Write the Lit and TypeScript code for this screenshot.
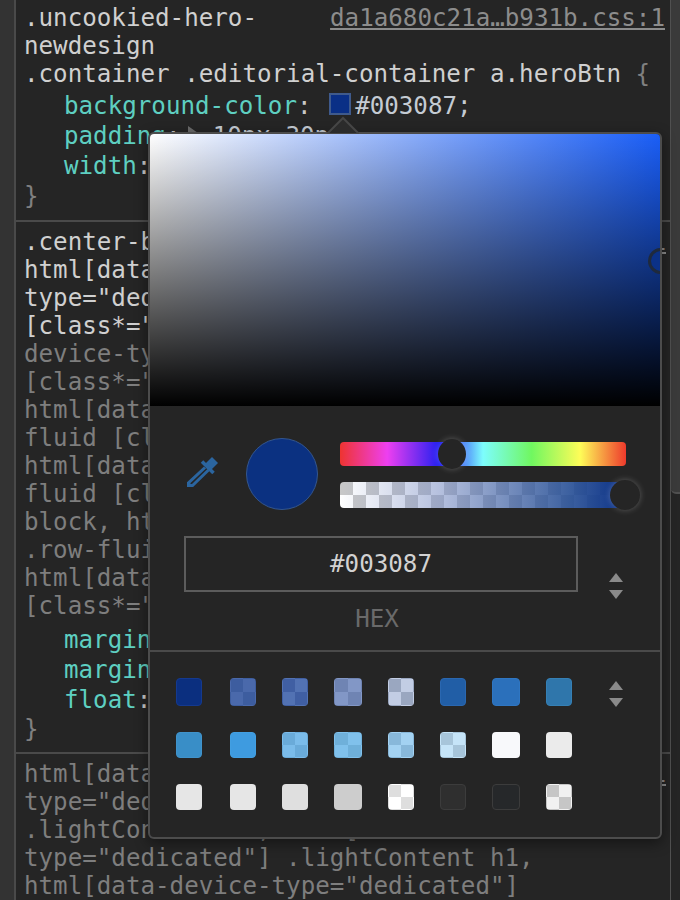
import { LitElement, html, css } from "lit";
import { customElement } from "lit/decorators.js";

type Line = { t: string; dim?: boolean };

const swatches: { a: string; b?: string; bd?: string }[] = [
  { a: "#0b2f7f", bd: "#14398f" },
  { a: "#3d5d9f", b: "#4a69ab" },
  { a: "#405fa3", b: "#5272b3" },
  { a: "#6f84b3", b: "#8297c6" },
  { a: "#9aa7c0", b: "#c2cde4" },
  { a: "#215ea6", bd: "#2a67b0" },
  { a: "#2b70bb", bd: "#2f76c2" },
  { a: "#2f76ab", bd: "#3580b5" },
  { a: "#398ec7", bd: "#4093cb" },
  { a: "#3e9be0", bd: "#429fe2" },
  { a: "#6aabd9", b: "#7bbcea" },
  { a: "#6fb0da", b: "#80c1ec" },
  { a: "#88b8da", b: "#a3d2f2" },
  { a: "#a7c5da", b: "#c5e4f8" },
  { a: "#f8f9fb" },
  { a: "#ebebeb" },
  { a: "#e6e6e6" },
  { a: "#e6e6e6" },
  { a: "#dfdfdf" },
  { a: "#cdcdcd" },
  { a: "#dedede", b: "#ffffff" },
  { a: "#2f2f2f", bd: "#3c3c3c" },
  { a: "#26282a", bd: "#3c3c3c" },
  { a: "#c6c6c6", b: "#f1f1f1" },
];

@customElement("app-root")
export class AppRoot extends LitElement {
  static styles = css`
    :host {
      display: block;
      position: relative;
      width: 680px;
      height: 900px;
      overflow: hidden;
      background: #252525;
      font-family: "DejaVu Sans Mono", "Liberation Mono", monospace;
      font-size: 24.2px;
      line-height: 28px;
      color: #d0d0d0;
    }
    .page { display: flex; height: 900px; }
    .gutter { width: 14px; flex: none; background: #333; border-right: 2px solid #4a4a4a; }
    .pane { flex: 1; min-width: 0; overflow: hidden; }
    .scroll { width: 9px; flex: none; border-left: 1px solid #505050; }
    .thumb {
      height: 492px;
      background: #3a3a3a;
      border-bottom: 2px solid #505050;
      border-bottom-left-radius: 5px;
    }
    .rule {
      padding: 4px 0 0 9px;
      border-bottom: 2px solid #4a4a4a;
      position: relative;
      box-sizing: border-box;
    }
    .rule.first { height: 222px; }
    .rule.second { height: 532px; padding-top: 6px; }
    .rule.third { border-bottom: 0; padding-top: 6px; }
    .sel { height: 28px; white-space: pre; margin-left: -1px; }
    .dim { color: #7e7e7e; }
    .brace { color: #808080; }
    .decl { height: 30px; line-height: 30px; padding-left: 39px; white-space: pre; }
    .first .decl.top { margin-top: 3px; }
    .first .decl + .sel { margin-top: 1px; }
    .second .decl.top { margin-top: 5px; }
    .prop { color: #5ecfc1; }
    .colon { color: #c8c8c8; }
    .val { color: #c4cbd3; }
    .tri {
      display: inline-block;
      width: 0;
      height: 0;
      margin: 0 0 0 -7px;
      vertical-align: 4px;
      border-left: 10px solid #6c6c6c;
      border-top: 7px solid transparent;
      border-bottom: 7px solid transparent;
    }
    .chip {
      display: inline-block;
      box-sizing: border-box;
      width: 22px;
      height: 22px;
      margin: 0 4px 0 3px;
      vertical-align: -1px;
      background: #0a2f86;
      border: 2px solid #3f5a8c;
    }
    .src {
      position: absolute;
      right: 5px;
      top: 4px;
      color: #8c8c8c;
      text-decoration: underline;
    }
    .src.low { top: 6px; right: 4px; }

    .popover {
      position: absolute;
      left: 148px;
      top: 132px;
      width: 514px;
      height: 707px;
      box-sizing: border-box;
      background: #252525;
      border: 2px solid #4c4c4c;
      border-radius: 6px;
      box-shadow: 0 4px 14px rgba(0, 0, 0, 0.45);
      display: flex;
      flex-direction: column;
    }
    .arrow {
      position: absolute;
      left: 177px;
      top: -18px;
      width: 32px;
      height: 18px;
    }
    .sat {
      position: relative;
      height: 272px;
      flex: none;
      overflow: hidden;
      border-radius: 4px 4px 0 0;
      background:
        linear-gradient(to top, #000, rgba(0, 0, 0, 0)),
        linear-gradient(to right, #fff, #1a5ef7);
    }
    .sat-thumb {
      position: absolute;
      left: 498px;
      top: 114px;
      width: 26px;
      height: 26px;
      box-sizing: border-box;
      border-radius: 50%;
      border: 3px solid #1f2a3d;
      background: #0b3187;
    }
    .controls {
      display: flex;
      align-items: flex-start;
      gap: 28px;
      padding: 32px 34px 0 34px;
      height: 98px;
      flex: none;
    }
    .dropper { width: 36px; height: 36px; flex: none; margin-top: 17px; margin-right: -2px; }
    .preview {
      width: 72px;
      height: 72px;
      box-sizing: border-box;
      flex: none;
      border-radius: 50%;
      background: #0b3181;
      border: 1px solid #33568f;
    }
    .sliders { flex: 1; display: flex; flex-direction: column; gap: 16px; padding-top: 4px; margin-left: -6px; }
    .track { position: relative; height: 24px; border-radius: 4px; }
    .hue {
      background: linear-gradient(to right,
        #ee3430 0%, #ee3ff0 16.5%, #1f1ff0 35%, #2a2cf5 38%, #7dfdfd 50%, #70f760 67%, #fefc58 84%, #ee3a2c 100%);
    }
    .alpha {
      height: 26px;
      background:
        linear-gradient(to right,
          rgba(140, 158, 205, 0) 0%,
          rgba(120, 140, 195, 0.55) 35%,
          rgba(40, 80, 150, 0.9) 80%,
          rgba(11, 49, 135, 1) 100%),
        repeating-conic-gradient(#fff 0 25%, #c8c8c8 0 50%) 0 0 / 26px 26px;
    }
    .knob {
      position: absolute;
      border-radius: 50%;
      background: #252525;
      box-shadow: 0 0 6px rgba(255, 255, 255, 0.25);
    }
    .knob.h { left: 98px; top: -3px; width: 28px; height: 30px; }
    .knob.a { left: 270px; top: -2px; width: 30px; height: 30px; }
    .format { display: flex; padding-left: 34px; height: 114px; flex: none; }
    .field { width: 394px; flex: none; display: flex; flex-direction: column; }
    .input {
      box-sizing: border-box;
      height: 56px;
      border: 2px solid #5c5c5c;
      display: flex;
      align-items: center;
      justify-content: center;
      color: #d2d2d2;
    }
    .label { margin-top: 13px; padding-right: 8px; text-align: center; color: #6a6a6a; }
    .step { display: flex; flex-direction: column; gap: 8px; width: 14px; }
    .step svg { display: block; width: 14px; height: 9px; }
    .format .step { margin: 37px 0 0 31px; }
    .swatches {
      border-top: 2px solid #4a4a4a;
      flex: none;
      display: flex;
      padding: 26px 0 0 26px;
    }
    .grid {
      width: 396px;
      flex: none;
      display: grid;
      grid-template-columns: 28px 26px 26px 28px 26px 26px 28px 26px;
      column-gap: 26px;
      row-gap: 26px;
    }
    .sw {
      height: 26px;
      box-sizing: border-box;
      border-radius: 4px;
      border: 1px solid transparent;
      overflow: hidden;
    }
    .sw:nth-child(-n + 8) { height: 28px; }
    .sw:nth-child(8n + 1) { width: 26px; }
    .swatches .step { margin: 3px 0 0 37px; }
  `;

  private arrows() {
    return html`<div class="step">
      <svg viewBox="0 0 14 9"><path d="M7 0 14 9H0z" fill="#8a8a8a" /></svg>
      <svg viewBox="0 0 14 9"><path d="M0 0H14L7 9z" fill="#8a8a8a" /></svg>
    </div>`;
  }

  private sel(lines: Line[]) {
    return lines.map(
      (l) => html`<div class="sel ${l.dim ? "dim" : ""}">${l.t}</div>`
    );
  }

  render() {
    return html`
      <div class="page">
        <div class="gutter"></div>
        <div class="pane">
          <section class="rule first">
            <span class="src">da1a680c21a…b931b.css:1</span>
            ${this.sel([{ t: ".uncookied-hero-" }, { t: "newdesign" }])}
            <div class="sel">.container .editorial-container a.heroBtn <span class="brace">{</span></div>
            <div class="decl top"><span class="prop">background-color</span><span class="colon">:</span> <span class="chip"></span><span class="val">#003087;</span></div>
            <div class="decl"><span class="prop">padding</span><span class="colon">:</span> <span class="tri"></span> <span class="val">10px 30px;</span></div>
            <div class="decl"><span class="prop">width</span><span class="colon">:</span> <span class="val">auto;</span></div>
            <div class="sel brace">}</div>
          </section>
          <section class="rule second">
            <span class="src low">1</span>
            ${this.sel([
              { t: ".center-block," },
              { t: "html[data-device-" },
              { t: 'type="dedicated"]' },
              { t: '[class*="span"],' },
              { t: 'device-type="', dim: true },
              { t: '[class*="span"]', dim: true },
              { t: "html[data-device", dim: true },
              { t: "fluid [class*=", dim: true },
              { t: "html[data-device", dim: true },
              { t: "fluid [class*=", dim: true },
              { t: "block, html[data", dim: true },
              { t: ".row-fluid", dim: true },
              { t: "html[data-device", dim: true },
              { t: '[class*="span"]', dim: true },
            ])}
            <div class="decl top"><span class="prop">margin-left</span><span class="colon">:</span> auto;</div>
            <div class="decl"><span class="prop">margin-right</span><span class="colon">:</span> auto;</div>
            <div class="decl"><span class="prop">float</span><span class="colon">:</span> none;</div>
            <div class="sel brace">}</div>
          </section>
          <section class="rule third">
            <span class="src low">1</span>
            ${this.sel([
              { t: "html[data-device-", dim: true },
              { t: 'type="dedicated"]', dim: true },
              { t: ".lightContent h1, html[data-device-", dim: true },
              { t: 'type="dedicated"] .lightContent h1,', dim: true },
              { t: 'html[data-device-type="dedicated"]', dim: true },
            ])}
          </section>
        </div>
        <div class="scroll"><div class="thumb"></div></div>
      </div>

      <div class="popover">
        <svg class="arrow" viewBox="0 0 32 18">
          <path d="M0 18 16 2 32 18z" fill="#2b2b2b" stroke="#464646" stroke-width="2" />
        </svg>
        <div class="sat"><div class="sat-thumb"></div></div>
        <div class="controls">
          <svg class="dropper" viewBox="0 0 36 36">
            <path d="M28 2 34 8 27 15 21 9z" fill="#2b659f" />
            <path d="M18 6.5 29.5 18" fill="none" stroke="#2b659f" stroke-width="3.5" />
            <path d="M21 12.5 5 27.5V30.5H8.5L24.5 15" fill="none" stroke="#2b659f" stroke-width="3" />
            <path d="M3 27H6V29.5H8.5V32H3z" fill="#2b659f" />
          </svg>
          <div class="preview"></div>
          <div class="sliders">
            <div class="track hue"><div class="knob h"></div></div>
            <div class="track alpha"><div class="knob a"></div></div>
          </div>
        </div>
        <div class="format">
          <div class="field">
            <div class="input">#003087</div>
            <div class="label">HEX</div>
          </div>
          ${this.arrows()}
        </div>
        <div class="swatches">
          <div class="grid">
            ${swatches.map((s) => {
              const bg = s.b
                ? `conic-gradient(${s.b} 0 25%, ${s.a} 0 50%, ${s.b} 0 75%, ${s.a} 0)`
                : s.a;
              return html`<div class="sw" style="background:${bg};${s.bd ? `border-color:${s.bd}` : ""}"></div>`;
            })}
          </div>
          ${this.arrows()}
        </div>
      </div>
    `;
  }
}
